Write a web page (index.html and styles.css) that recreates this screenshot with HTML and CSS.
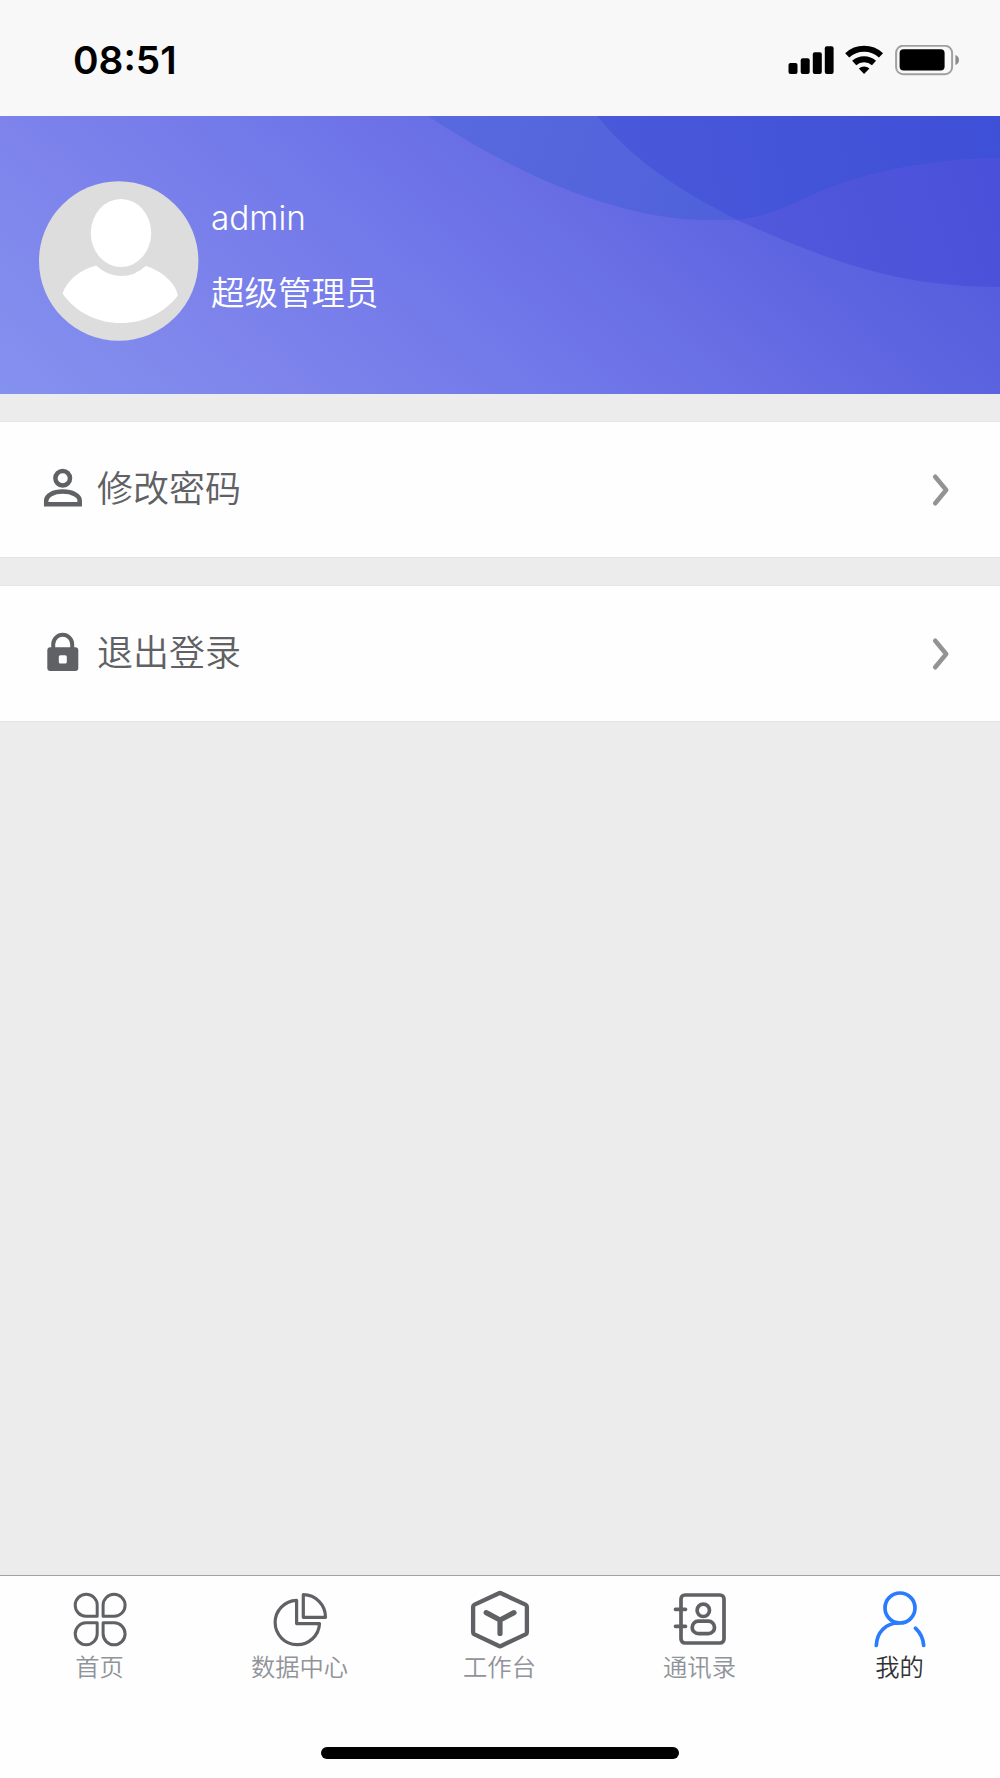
FILE: index.html
```
<!DOCTYPE html>
<html lang="zh-CN">
<head>
    <meta charset="UTF-8">
    <meta name="viewport" content="width=device-width, initial-scale=1.0">
    <title>我的</title>
    <link rel="stylesheet" href="styles.css">
</head>
<body>
    <div class="page">
        <header class="status-bar">
            <span class="time">08:51</span>
            <svg class="status-icons" width="172" height="32" viewBox="0 0 172 32">
                <rect x="0.5" y="18" width="9" height="11" rx="2"/>
                <rect x="12.7" y="13.2" width="9" height="15.8" rx="2"/>
                <rect x="24.8" y="7.2" width="9" height="21.8" rx="2"/>
                <rect x="36.8" y="1.2" width="8.8" height="27.8" rx="2"/>
                <g fill="none" stroke="#000" stroke-width="6">
                    <path d="M59.2 10.4a25 25 0 0 1 33.8 0"/>
                    <path d="M66.2 18a14.6 14.6 0 0 1 19.8 0"/>
                </g>
                <path d="M76.1 29l-5.3-5.4a7.6 7.6 0 0 1 10.6 0z"/>
                <rect x="108.1" y="0.8" width="56" height="28.4" rx="7" fill="none" stroke="#a0a0a0" stroke-width="2"/>
                <rect x="111.6" y="4.3" width="45" height="21.2" rx="4"/>
                <path d="M167.4 10q3.6 1.4 3.6 5t-3.6 5z" fill="#8c8c8c"/>
            </svg>
        </header>

        <section class="banner">
            <svg class="banner-bg" width="1000" height="278" viewBox="0 0 1000 278">
                <defs>
                    <linearGradient id="base" gradientUnits="userSpaceOnUse" x1="0" y1="278" x2="628" y2="-431">
                        <stop offset="0" stop-color="#8591ef"/>
                        <stop offset="0.22" stop-color="#7d83eb"/>
                        <stop offset="0.4" stop-color="#7178e9"/>
                        <stop offset="0.55" stop-color="#686de4"/>
                        <stop offset="0.66" stop-color="#5e65e0"/>
                        <stop offset="0.8" stop-color="#555ddd"/>
                    </linearGradient>
                    <linearGradient id="waveLeft" gradientUnits="userSpaceOnUse" x1="430" y1="0" x2="740" y2="104">
                        <stop offset="0" stop-color="#5969df"/>
                        <stop offset="1" stop-color="#4f61da"/>
                    </linearGradient>
                    <linearGradient id="waveRight" gradientUnits="userSpaceOnUse" x1="740" y1="130" x2="1000" y2="50">
                        <stop offset="0" stop-color="#5259dc"/>
                        <stop offset="1" stop-color="#4a50d9"/>
                    </linearGradient>
                    <linearGradient id="waveTop" gradientUnits="userSpaceOnUse" x1="600" y1="60" x2="1000" y2="0">
                        <stop offset="0" stop-color="#4a58da"/>
                        <stop offset="1" stop-color="#3e50d7"/>
                    </linearGradient>
                </defs>
                <rect width="1000" height="278" fill="url(#base)"/>
                <path d="M428 0C500 48 610 104 707 104C722 104 730 104 737 104C690 80 635 48 597 0z" fill="url(#waveLeft)"/>
                <path d="M737 104C770 101 790 89 820 76C865 57 920 44 1000 42V171C900 171 830 146 737 104z" fill="url(#waveRight)"/>
                <path d="M597 0C635 48 690 80 737 104C770 101 790 89 820 76C865 57 920 44 1000 42V0z" fill="url(#waveTop)"/>
            </svg>
            <svg class="avatar" width="160" height="160" viewBox="0 0 160 160">
                <circle cx="79.7" cy="80" r="79.7" fill="#ddd"/>
                <ellipse cx="82" cy="52" rx="30.2" ry="34" fill="#fff"/>
                <path d="M57.2 84.6Q68 95 82 95T106.7 84.9C124 90 137 103 138.9 114.5C125 132 105 142 82 142S37 132 23.5 112.5C28 100 40 89 57.2 84.6z" fill="#fff"/>
            </svg>
            <div class="user">
                <p class="name">admin</p>
                <p class="role">超级管理员</p>
            </div>
        </section>

        <ul class="menu">
            <li class="menu-item">
                <svg class="menu-icon" width="40" height="40" viewBox="0 0 40 40" fill="none" stroke="#5f6165" stroke-width="4.5">
                    <circle cx="19.7" cy="10.2" r="7.3"/>
                    <path d="M3.2 36.2V32.5C3.2 27.5 10 23.6 19.7 23.6S36.7 27.5 36.7 32.5V36.2z"/>
                </svg>
                <span class="menu-text">修改密码</span>
                <svg class="arrow" width="20" height="36" viewBox="0 0 20 36"><path d="M4.2 4.7L15.2 18L4.2 31.3"/></svg>
            </li>
            <li class="menu-item">
                <svg class="menu-icon" width="40" height="40" viewBox="0 0 40 40">
                    <path d="M10.2 17V12.3a9.5 9.5 0 0 1 19 0V17" fill="none" stroke="#5f6165" stroke-width="4"/>
                    <path fill="#5f6165" fill-rule="evenodd" d="M7.3 15.3H32.3a3 3 0 0 1 3 3V36a3 3 0 0 1-3 3H7.3a3 3 0 0 1-3-3V18.3a3 3 0 0 1 3-3zM17.3 23.3a1.5 1.5 0 0 0-1.5 1.5V30a1.5 1.5 0 0 0 1.5 1.5H22.3a1.5 1.5 0 0 0 1.5-1.5V24.8a1.5 1.5 0 0 0-1.5-1.5z"/>
                </svg>
                <span class="menu-text">退出登录</span>
                <svg class="arrow" width="20" height="36" viewBox="0 0 20 36"><path d="M4.2 4.7L15.2 18L4.2 31.3"/></svg>
            </li>
        </ul>

        <footer class="footer">
            <nav class="tabs">
                <a class="tab">
                    <svg class="tab-icon" width="60" height="60" viewBox="0 0 60 60" stroke-width="3">
                        <path d="M27.2 26.3H15.9A11 11 0 1 1 27.2 15.3z"/>
                        <path d="M33.1 26.3H44.2A11 11 0 1 0 33.1 15.3z"/>
                        <path d="M27.2 32.8H15.9A11 11 0 1 0 27.2 43.8z"/>
                        <path d="M33.1 32.8H44.2A11 11 0 1 1 33.1 43.8z"/>
                    </svg>
                    <span>首页</span>
                </a>
                <a class="tab">
                    <svg class="tab-icon" width="60" height="60" viewBox="0 0 60 60" stroke-width="3.2">
                        <path d="M26.6 10.3V33.6H49.5A22.2 22.2 0 1 1 26.6 10.3z"/>
                        <path d="M33.3 4.7V27.3H55.5A22.4 22.4 0 0 0 33.3 4.7z"/>
                    </svg>
                    <span>数据中心</span>
                </a>
                <a class="tab">
                    <svg class="tab-icon" width="60" height="60" viewBox="0 0 60 60" stroke-width="4.3">
                        <path d="M28.5 3.5Q30 2.5 31.5 3.5L55.5 14.6Q56.9 15.3 56.9 16.8V42.2Q56.9 43.7 55.5 44.4L31.5 55.7Q30 56.7 28.5 55.7L4.5 44.4Q3.1 43.7 3.1 42.2V16.8Q3.1 15.3 4.5 14.6z"/>
                        <path d="M16.2 22.6L30 30L44 22.6M30 30V43.5" stroke-width="5.2"/>
                    </svg>
                    <span>工作台</span>
                </a>
                <a class="tab">
                    <svg class="tab-icon" width="60" height="60" viewBox="0 0 60 60" stroke-width="3.7">
                        <rect x="11" y="5" width="43" height="48" rx="4"/>
                        <path d="M5.5 19.3H15.5M5.5 36.3H15.5"/>
                        <circle cx="33.3" cy="20.3" r="6.2"/>
                        <rect x="22.2" y="31.2" width="22.3" height="12.4" rx="6.2"/>
                    </svg>
                    <span>通讯录</span>
                </a>
                <a class="tab active">
                    <svg class="tab-icon" width="60" height="60" viewBox="0 0 60 60" stroke-width="3.7">
                        <circle cx="30" cy="18" r="15"/>
                        <path d="M6.3 55.5C6.8 42 16 33 28.5 33M45.4 38.2C50 42.5 53.2 48.5 53.7 55.5"/>
                    </svg>
                    <span>我的</span>
                </a>
            </nav>
            <div class="home-bar"></div>
        </footer>
    </div>
</body>
</html>
```
FILE: styles.css
```
* {
    box-sizing: border-box;
    margin: 0;
    padding: 0;
}
body {
    font-family: Inter, "Noto Sans CJK SC", sans-serif;
    background-color: #ececec;
}
.page {
    display: flex;
    flex-direction: column;
    width: 1000px;
    height: 1778px;
}
.status-bar {
    display: flex;
    justify-content: space-between;
    align-items: flex-start;
    height: 116px;
    padding: 45px 40px 0 73px;
    background-color: #f8f8f8;
}
.time {
    margin-top: -1px;
    font-size: 38.8px;
    font-weight: 600;
    line-height: 32px;
}
.banner {
    position: relative;
    display: flex;
    height: 278px;
    padding: 65px 0 0 39px;
    color: white;
}
.banner-bg {
    position: absolute;
    top: 0;
    left: 0;
}
.avatar, .user {
    position: relative;
}
.user {
    margin-left: 12px;
}
.name {
    margin-top: 15px;
    font-size: 33.3px;
    font-weight: 300;
    line-height: 44px;
}
.role {
    margin-top: 31px;
    font-size: 33.5px;
    font-weight: 350;
    line-height: 44px;
}
.menu {
    display: flex;
    flex-direction: column;
    gap: 27px;
    margin-top: 27px;
    list-style: none;
}
.menu-item {
    display: flex;
    align-items: center;
    height: 137px;
    padding: 0 49px 0 43px;
    background-color: #fefefe;
    border-top: 1px solid #e4e5ec;
    border-bottom: 1px solid #e4e5ec;
}
.menu-icon {
    margin-bottom: 3px;
}
.menu-text {
    flex: 1;
    margin-left: 14px;
    margin-bottom: 7px;
    font-size: 36px;
    font-weight: 350;
    color: #5f6165;
}
.arrow path {
    fill: none;
    stroke: #929395;
    stroke-width: 4.5;
    stroke-linecap: round;
    stroke-linejoin: round;
}
.footer {
    display: flex;
    flex-direction: column;
    align-items: center;
    justify-content: space-between;
    height: 203px;
    margin-top: auto;
    padding: 14px 0 19px;
    background-color: #fefefe;
    border-top: 1px solid #a2a2a2;
}
.tabs {
    display: grid;
    grid-template-columns: repeat(5, 1fr);
    width: 100%;
}
.tab {
    display: flex;
    flex-direction: column;
    align-items: center;
    font-size: 24.3px;
    font-weight: 350;
    line-height: 34px;
    color: #909399;
}
.tab span {
    margin-right: 1px;
}
.tab-icon {
    fill: none;
    stroke: #5f6165;
    stroke-linecap: round;
    stroke-linejoin: round;
}
.active {
    color: #303133;
}
.active .tab-icon {
    stroke: #2b7bff;
}
.home-bar {
    width: 358px;
    height: 12px;
    border-radius: 6px;
    background-color: black;
}
```
